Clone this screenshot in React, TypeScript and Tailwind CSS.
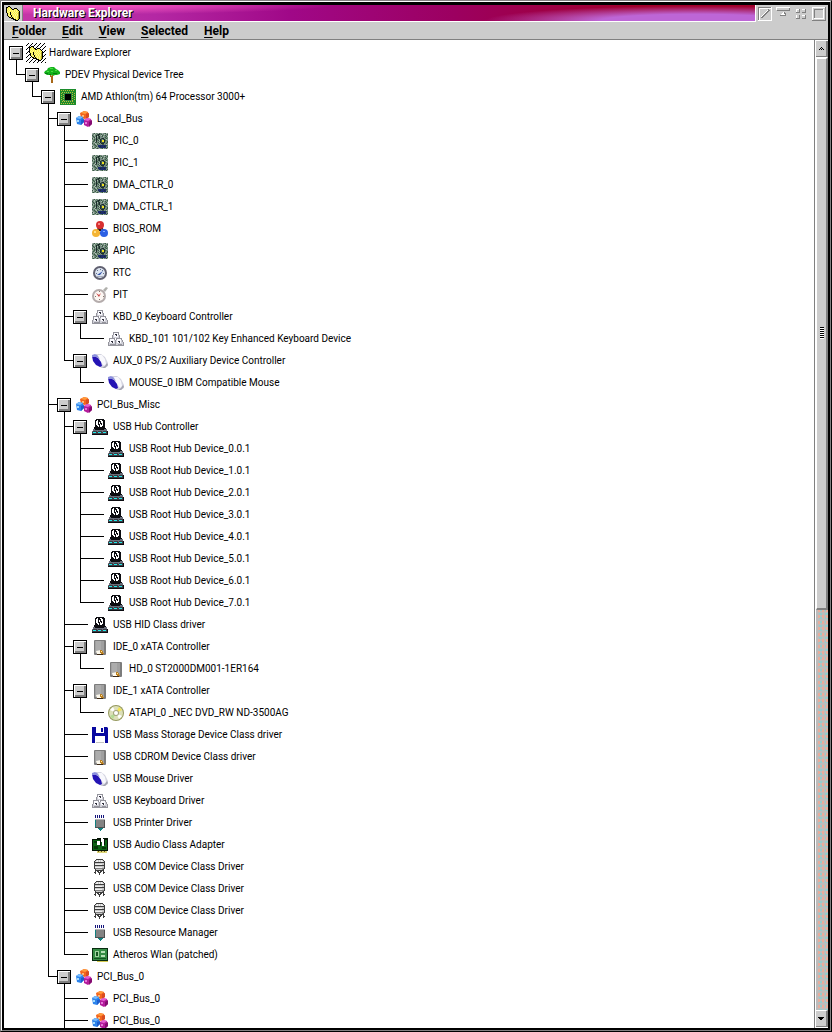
import { useState } from 'react';
import type { ReactNode } from 'react';

type IconName =
  | 'folder'
  | 'tree'
  | 'cpu'
  | 'bus'
  | 'board'
  | 'rom'
  | 'gauge'
  | 'timer'
  | 'keys'
  | 'mouse'
  | 'hub'
  | 'disk'
  | 'cd'
  | 'floppy'
  | 'printer'
  | 'audio'
  | 'com'
  | 'wlan';

type Device = {
  id: string;
  label: string;
  icon: IconName;
  children?: Device[];
  // siblings below this one are not enumerated yet
  more?: boolean;
};

type Row = {
  device: Device;
  guides: boolean[];
  last: boolean;
  depth: number;
};

const hubDevices: Device[] = [0, 1, 2, 3, 4, 5, 6, 7].map((n) => ({
  id: `hub-${n}`,
  label: `USB Root Hub Device_${n}.0.1`,
  icon: 'hub',
}));

const devices: Device[] = [
  {
    id: 'root',
    label: 'Hardware Explorer',
    icon: 'folder',
    children: [
      {
        id: 'pdev',
        label: 'PDEV Physical Device Tree',
        icon: 'tree',
        children: [
          {
            id: 'cpu',
            label: 'AMD Athlon(tm) 64 Processor 3000+',
            icon: 'cpu',
            children: [
              {
                id: 'local',
                label: 'Local_Bus',
                icon: 'bus',
                children: [
                  { id: 'pic0', label: 'PIC_0', icon: 'board' },
                  { id: 'pic1', label: 'PIC_1', icon: 'board' },
                  { id: 'dma0', label: 'DMA_CTLR_0', icon: 'board' },
                  { id: 'dma1', label: 'DMA_CTLR_1', icon: 'board' },
                  { id: 'bios', label: 'BIOS_ROM', icon: 'rom' },
                  { id: 'apic', label: 'APIC', icon: 'board' },
                  { id: 'rtc', label: 'RTC', icon: 'gauge' },
                  { id: 'pit', label: 'PIT', icon: 'timer' },
                  {
                    id: 'kbd0',
                    label: 'KBD_0 Keyboard Controller',
                    icon: 'keys',
                    children: [
                      {
                        id: 'kbd101',
                        label: 'KBD_101 101/102 Key Enhanced Keyboard Device',
                        icon: 'keys',
                      },
                    ],
                  },
                  {
                    id: 'aux0',
                    label: 'AUX_0 PS/2 Auxiliary Device Controller',
                    icon: 'mouse',
                    children: [
                      { id: 'mouse0', label: 'MOUSE_0 IBM Compatible Mouse', icon: 'mouse' },
                    ],
                  },
                ],
              },
              {
                id: 'misc',
                label: 'PCI_Bus_Misc',
                icon: 'bus',
                children: [
                  { id: 'usbhub', label: 'USB Hub Controller', icon: 'hub', children: hubDevices },
                  { id: 'hid', label: 'USB HID Class driver', icon: 'hub' },
                  {
                    id: 'ide0',
                    label: 'IDE_0 xATA Controller',
                    icon: 'disk',
                    children: [{ id: 'hd0', label: 'HD_0 ST2000DM001-1ER164', icon: 'disk' }],
                  },
                  {
                    id: 'ide1',
                    label: 'IDE_1 xATA Controller',
                    icon: 'disk',
                    children: [
                      { id: 'atapi0', label: 'ATAPI_0 _NEC DVD_RW ND-3500AG', icon: 'cd' },
                    ],
                  },
                  { id: 'msd', label: 'USB Mass Storage Device Class driver', icon: 'floppy' },
                  { id: 'cdrom', label: 'USB CDROM Device Class driver', icon: 'disk' },
                  { id: 'usbmouse', label: 'USB Mouse Driver', icon: 'mouse' },
                  { id: 'usbkbd', label: 'USB Keyboard Driver', icon: 'keys' },
                  { id: 'usbprt', label: 'USB Printer Driver', icon: 'printer' },
                  { id: 'usbaudio', label: 'USB Audio Class Adapter', icon: 'audio' },
                  { id: 'com1', label: 'USB COM Device Class Driver', icon: 'com' },
                  { id: 'com2', label: 'USB COM Device Class Driver', icon: 'com' },
                  { id: 'com3', label: 'USB COM Device Class Driver', icon: 'com' },
                  { id: 'resmgr', label: 'USB Resource Manager', icon: 'printer' },
                  { id: 'wlan', label: 'Atheros Wlan (patched)', icon: 'wlan' },
                ],
              },
              {
                id: 'pci0',
                label: 'PCI_Bus_0',
                icon: 'bus',
                children: [
                  { id: 'pci0a', label: 'PCI_Bus_0', icon: 'bus' },
                  { id: 'pci0b', label: 'PCI_Bus_0', icon: 'bus', more: true },
                ],
              },
            ],
          },
        ],
      },
    ],
  },
];

// Draws one rect per dot of a small bitmap, '.' is transparent
const Bitmap = ({ rows, colors }: { rows: string[]; colors: Record<string, string> }) => (
  <>
    {rows.flatMap((line, y) =>
      [...line].map((dot, x) =>
        dot === '.' ? null : (
          <rect key={`${x}-${y}`} x={x} y={y} width="1" height="1" fill={colors[dot]} />
        ),
      ),
    )}
  </>
);

const folderArt = (
  <Bitmap
    colors={{ k: '#000', y: '#f6ee4a', w: '#fdf890', g: '#a89c20' }}
    rows={[
      '................',
      '...kk...........',
      '.kkyyk..........',
      '.kyywyk..kkk....',
      '.kwywyykkywyk...',
      '.kywywywywywyk..',
      '.kwywyywywywyyk.',
      '.kywykwywywywgk.',
      '..kywkywywywygk.',
      '..kwykwywywywgk.',
      '..kywykywywywgk.',
      '...kywkwywywygk.',
      '....kkykywywygk.',
      '......kkkwywygk.',
      '........kkkyyk..',
      '..........kkk...',
    ]}
  />
);

const busArt = (
  <>
    <path d="M4 2L8 0L12 1L13 6L9 8L5 7Z" fill="#f4641c" />
    <path d="M5 2L8 0L12 1L9 3Z" fill="#ff9c3c" />
    <path d="M10 3L13 2V6L10 8Z" fill="#d84c20" />
    <path d="M6 4h2v2h-2z" fill="#ffb870" />
    <path d="M0 7L3 5L7 6L8 11L5 14L1 13Z" fill="#2c84ec" />
    <path d="M0 7L3 5L7 6L4 8Z" fill="#78bcfc" />
    <path d="M1 9h2v2h-2z" fill="#a4dcff" />
    <path d="M5 9L8 8V11L5 14Z" fill="#1c5ccc" />
    <path d="M8 9L11 7L15 8L16 13L12 16L8 14Z" fill="#b41c9c" />
    <path d="M8 9L11 7L15 8L12 10Z" fill="#e460d0" />
    <path d="M9 11h2v2h-2z" fill="#e478d8" />
    <path d="M13 11L16 9V13L13 16Z" fill="#840c70" />
  </>
);

const boardArt = (
  <Bitmap
    colors={{
      d: '#3c5848',
      g: '#64886c',
      l: '#acbcb0',
      k: '#1c2c2c',
      n: '#1c2c6c',
      s: '#7c8c88',
      y: '#f0e020',
    }}
    rows={[
      'lsdlgsldgslsgdls',
      'sglgsdkkgdsglsgd',
      'dslgkdkgsldgsdsg',
      'gdsgkldksgdlsgdl',
      'sgdlksdkssssgdsg',
      'dlgskgdksdkksgdg',
      'gsdgkdsgkdsdkgls',
      'lgdskgdlkdyykdgs',
      'sdglkssgkdyykgsd',
      'gslddgdlkdddksgd',
      'dsglsgsdskkksgds',
      'sgdsldgsgsddsgls',
      'lsgdgsnnnnnnnndg',
      'dlsgdsnnknnnkngs',
      'slgdlsgnnnnnnnsd',
      'gdslgdslsgdlgsdl',
    ]}
  />
);

const hubArt = (
  <Bitmap
    colors={{ k: '#0c0c10', w: '#ffffff', s: '#686c78', d: '#3c3c44', c: '#20ecec' }}
    rows={[
      '....kkkkkkkk....',
      '...kkwkkwwkkk...',
      '...kwwkkkwwkk...',
      '...kwwkwkwwkk...',
      '...kwwkwkkwkk...',
      '...kwwkkwkwkk...',
      '...kkwwkwwwkk...',
      '...kkkwkwwkkk...',
      '..kkkkkkkkkkk...',
      '..kkkkkkkkkkkk..',
      '.sskkkkkkkkksss.',
      '.ssssssssssssss.',
      'sddddsddddsddddk',
      'dcccddcccddcccdk',
      'dddddddddddddddk',
      'kkkkkkkkkkkkkkkk',
    ]}
  />
);

const diskArt = (
  <>
    <rect x="2" y="1" width="12" height="15" rx="1" fill="#7c7c7c" />
    <path d="M3 2h9v12h-9z" fill="#a0a0a0" />
    <path d="M4 2h5v10h-5z" fill="#acacac" />
    <path d="M4 12L9 11V13L11 15H5Z" fill="#fcf8ec" />
    <path d="M8 11h2v1h1v2h1v1h-3v-1h-1z" fill="#bc8020" />
    <path d="M5 15h6v1h-6z" fill="#3c2814" />
    <path d="M9 12h1v1h-1z" fill="#fce8a0" />
  </>
);

const keysArt = (
  <Bitmap
    colors={{ k: '#30303c', g: '#94949c', l: '#d0d0d8', w: '#fbfbff' }}
    rows={[
      '................',
      '.....gggggg.....',
      '.....gwwwwg.....',
      '.....gwkkwg.....',
      '....glwwkwlg....',
      '....glwwwwlg....',
      '....gllllllg....',
      '.gggggg.gggggg..',
      '.gwwwwg.gwwwwg..',
      '.gwwwwlglwwwwlg.',
      '.gwkkwlglwkkwlg.',
      'glwwkwlglwwkwllg',
      'gllllllglllllllg',
      'glggggggllgggglg',
      'gggggggggggggggg',
      '................',
    ]}
  />
);

const mouseArt = (
  <>
    <path d="M4 1L9 1L13 4L16 10L16 13L13 15L9 15L5 9Z" fill="#d4d4e0" />
    <path d="M6 2L10 2L13 6L14 11L12 13L8 8Z" fill="#f8f8fc" />
    <path d="M15 10L16 12L13 15H10L13 13Z" fill="#a4a4b0" />
    <path d="M0 3L2 3L6 5L9 9L10 13L8 14L4 12L1 8Z" fill="#2414b4" />
    <path d="M0 2L3 1L5 2L8 6L5 4L0 4Z" fill="#8c90dc" />
  </>
);

const printerArt = (
  <>
    <path d="M3 0h1v3h-1zM5 0h1v3h-1zM7 0h1v3h-1zM9 0h1v3h-1zM11 0h1v3h-1z" fill="#14147c" />
    <path d="M3 4h10v1h-10z" fill="#b4b4b4" />
    <path d="M3 5h10v7h-10z" fill="#848484" />
    <path d="M3 5h1v7h-1z" fill="#108080" />
    <path d="M12 5h1v7h-1zM3 12h10v1h-10z" fill="#505050" />
    <path d="M6 13h5v1h-1v1h-1v1h-1v-1h-1v-1h-1z" fill="#108080" />
  </>
);

const comArt = (
  <Bitmap
    colors={{ k: '#3c3c3c', g: '#808080', l: '#c8c8c8', w: '#f0f0f0' }}
    rows={[
      '....kkkkkkk.....',
      '...klwlwlwlk....',
      '..klwwlwlwwlk...',
      '..kkkkkkkkkkk...',
      '..klllllllllk...',
      '..kwwwwwwwllk...',
      '..kkkkkkkkkkk...',
      '..klllllllllk...',
      '..kwwwwwwwllk...',
      '..kgggggggggk...',
      '...kllllllgk....',
      '...kkkkkkkkk....',
      '...k.kk.kk.k....',
      '..kk..kkk..kk...',
      '...k...k...k....',
      '.......k........',
    ]}
  />
);

const art: Record<IconName, ReactNode> = {
  folder: folderArt,
  bus: busArt,
  board: boardArt,
  hub: hubArt,
  disk: diskArt,
  keys: keysArt,
  mouse: mouseArt,
  printer: printerArt,
  com: comArt,
  tree: (
    <>
      <path d="M0 6L1 4L3 3L4 1L7 0H10L12 2L14 3L16 5V7L13 8H11L9 9L6 8H3Z" fill="#14b41c" />
      <path d="M3 4h2v1h-2zM6 1h3v1h-3zM11 3h2v1h-2zM7 4h2v1h-2z" fill="#4cdc44" />
      <path d="M1 6h3v1h-3zM9 6h4v1h-4zM5 7h2v1h-2z" fill="#087c10" />
      <path d="M6 8h1v1h1v-1h1v8h-2v-6h-1z" fill="#a86818" />
    </>
  ),
  cpu: (
    <>
      <rect width="16" height="16" fill="#1c8c2c" />
      <path d="M1 1.5H15M2 3.5H14M2 12.5H14M1 14.5H15" stroke="#c0b83c" strokeDasharray="1 1" />
      <path d="M1.5 4V12M3.5 5V12M12.5 5V12M14.5 4V12" stroke="#c0b83c" strokeDasharray="1 1" />
      <rect x="4" y="4" width="8" height="8" fill="#2c8440" />
      <rect x="5" y="5" width="6" height="6" fill="#000" />
    </>
  ),
  rom: (
    <>
      <path d="M8 5L4 12H13Z" fill="none" stroke="#301c18" strokeWidth="2" />
      <circle cx="8" cy="4" r="4" fill="#d83030" />
      <circle cx="4" cy="12" r="4" fill="#f4b434" />
      <circle cx="12" cy="12" r="4" fill="#2c60e4" />
      <path d="M6 2h2v2h-2z" fill="#f88484" />
      <path d="M2 10h2v2h-2z" fill="#ffe08c" />
      <path d="M11 10h2v1h-2z" fill="#84acff" />
      <path d="M7 8h2v2h-2z" fill="#301c18" />
    </>
  ),
  gauge: (
    <>
      <circle cx="8" cy="8" r="7" fill="#606070" />
      <circle cx="8" cy="8" r="5" fill="#dce4f0" />
      <path d="M4 8h1v1h-1zM8 4h1v1h-1zM11 8h1v1h-1zM5 5h1v1h-1zM10 5h1v1h-1z" fill="#64708c" />
      <path d="M5 10L11 6L8 10Z" fill="#3454a8" />
      <path d="M5 11h6v1h-6z" fill="#a8acbc" />
    </>
  ),
  timer: (
    <>
      <path d="M11 3L14 0L16 1L13 5Z" fill="#b0b0ac" />
      <circle cx="7" cy="9" r="7" fill="#b4acac" />
      <circle cx="7" cy="9" r="5" fill="#fcf6f2" />
      <path d="M7 4h1v1h-1zM3 9h1v1h-1zM11 9h1v1h-1zM7 12h1v1h-1z" fill="#88786c" />
      <path d="M4 6L7 10L9 6L7 8Z" fill="#c83c3c" />
    </>
  ),
  cd: (
    <>
      <circle cx="8" cy="8" r="8" fill="#94985c" />
      <circle cx="8" cy="8" r="7" fill="#dcdfb8" />
      <path d="M8 8L2 5L5 2Z" fill="#fff" />
      <path d="M8 8L11 14L14 11Z" fill="#fff" />
      <path d="M8 8L14 5L11 2Z" fill="#f4e450" />
      <path d="M8 8L2 11L5 14Z" fill="#b4dc94" />
      <circle cx="8" cy="8" r="3" fill="#a4a47c" />
      <circle cx="8" cy="8" r="2" fill="#fff" />
    </>
  ),
  floppy: (
    <>
      <path d="M0 0H15L16 1V16H0Z" fill="#0808a0" />
      <path d="M4 0h8v6h-8z" fill="#fff" />
      <path d="M9 1h2v4h-2z" fill="#0808a0" />
      <path d="M3 9h10v7h-10z" fill="#fff" />
      <path d="M4 15h8v1h-8z" fill="#c4c4c4" />
    </>
  ),
  audio: (
    <>
      <path d="M0 2H5V1H16V14H0Z" fill="#041404" />
      <path d="M1 3h14v10h-14z" fill="#0c6414" />
      <path d="M2 9h4v3h-4zM10 10h4v2h-4zM2 4h3v2h-3z" fill="#043808" />
      <path d="M5 4h3v4h-3zM9 0h2v2h1v7h-2v-4h-1z" fill="#fff" />
      <path d="M8 2h1v7h-1zM12 1h1v7h-1z" fill="#041404" />
      <path d="M5 14h10v2h-10z" fill="#dcd478" />
      <path d="M6 14h1v1h-1zM9 14h1v1h-1zM12 14h1v1h-1z" fill="#685c14" />
    </>
  ),
  wlan: (
    <>
      <path d="M0 1h16v13h-16z" fill="#082c10" />
      <path d="M1 2h14v11h-14z" fill="#348c44" />
      <path d="M3 4h4v6h-4z" fill="#a0d4a0" />
      <path d="M4 5h2v4h-2z" fill="#145420" />
      <path d="M9 4h4v2h-4zM9 8h4v2h-4z" fill="#b4e0b4" />
      <path d="M2 11h12v1h-12z" fill="#145420" />
      <path d="M5 14h11v1h-11z" fill="#d4c850" />
    </>
  ),
};

const DeviceIcon = ({ name }: { name: IconName }) => (
  <svg viewBox="0 0 16 16" className="size-4 shrink-0" aria-hidden="true">
    {art[name]}
  </svg>
);

// Icon of the opened object, with the "in use" hatching behind it
const OpenIcon = ({ name }: { name: IconName }) => (
  <svg viewBox="-2 -2 20 20" className="-mx-[2px] size-5 shrink-0" aria-hidden="true">
    <path
      d="M-2 1L1 -2M-2 5L5 -2M-2 9L9 -2M-2 13L13 -2M-2 17L17 -2M1 18L18 1M5 18L18 5M9 18L18 9M13 18L18 13M17 18L18 17"
      stroke="#000"
      shapeRendering="crispEdges"
    />
    {art[name]}
  </svg>
);

const flatten = (
  list: Device[],
  closed: string[],
  depth = 0,
  guides: boolean[] = [],
): Row[] =>
  list.flatMap((device, i) => {
    const last = i === list.length - 1 && !device.more;
    const row = { device, guides, last, depth };
    if (!device.children || closed.includes(device.id)) return [row];
    const next = depth === 0 ? [] : [...guides, !last];
    return [row, ...flatten(device.children, closed, depth + 1, next)];
  });

const TreeRow = ({
  row,
  open,
  onToggle,
}: {
  row: Row;
  open: boolean;
  onToggle: () => void;
}) => {
  const { device, guides, last, depth } = row;
  const branch = !!device.children;

  return (
    <li className="flex h-[22px] shrink-0 pl-[5px]">
      {depth > 0 && (
        <div className="flex shrink-0 pl-[7px]">
          {guides.map((on, i) => (
            <span key={i} className={on ? 'w-4 border-l border-black' : 'w-4'} />
          ))}
          <span className={branch ? 'flex w-[9px] flex-col' : 'mr-1 flex w-6 flex-col'}>
            <span className="h-[11px] border-b border-l border-black" />
            {!last && <span className="h-[11px] border-l border-black" />}
          </span>
        </div>
      )}
      {branch && (
        <div className="mr-[5px] flex w-[14px] shrink-0 flex-col pt-1">
          <button
            type="button"
            aria-expanded={open}
            aria-label={device.label}
            onClick={onToggle}
            className="flex size-[14px] shrink-0 items-center justify-center border border-black bg-[#ccc] shadow-[inset_1px_1px_0_#fff,inset_-2px_-2px_0_#808080]"
          >
            <span className="h-px w-[6px] bg-black" />
          </button>
          {open && <span className="ml-[7px] h-1 border-l border-black" />}
        </div>
      )}
      <div className="flex items-center gap-[5px]">
        {depth === 0 ? <OpenIcon name={device.icon} /> : <DeviceIcon name={device.icon} />}
        <span className="whitespace-nowrap">{device.label}</span>
      </div>
    </li>
  );
};

const menus = ['Folder', 'Edit', 'View', 'Selected', 'Help'];

const TitleBar = () => (
  <header className="flex h-[17px] shrink-0 bg-[#ccc]">
    <div className="flex min-w-0 flex-1 items-center border-r border-b border-white bg-[radial-gradient(ellipse_28%_95%_at_92%_100%,#bd66d6_0%,#bd66d6_45%,transparent_100%),radial-gradient(ellipse_36%_60%_at_8%_0%,#ff5cc4_0%,transparent_100%),linear-gradient(to_right,#c838a8_0%,#b428a4_20%,#a00888_38%,#9c0060_60%,#a0002a_85%)]">
      <button
        type="button"
        aria-label="System menu"
        className="flex h-full w-[19px] shrink-0 items-center justify-center border-r border-[#808080] bg-[#ccc]"
      >
        <DeviceIcon name="folder" />
      </button>
      <h1 className="ml-[10px] text-xs leading-4 font-bold text-white [text-shadow:1px_1px_0_#000]">
        Hardware Explorer
      </h1>
    </div>
    <div className="flex h-full items-center gap-1 px-[2px]">
      <button type="button" aria-label="Close">
        <svg width="14" height="14" shapeRendering="crispEdges" fill="none">
          <path d="M0.5 0.5H13.5V13.5H0.5Z" stroke="#808080" />
          <path d="M1.5 13V1.5H13M13.5 0V13.5H0" stroke="#fff" />
          <path d="M3 11L11 3" stroke="#808080" strokeWidth="2" />
          <path d="M3 10L10 3" stroke="#fff" />
        </svg>
      </button>
      <button type="button" aria-label="Hide">
        <svg width="14" height="14" shapeRendering="crispEdges" fill="none">
          <path d="M0.5 3V0.5H14" stroke="#fff" />
          <path d="M1 3.5H13.5V1" stroke="#808080" />
          <path d="M4 8L7 5L10 8Z" fill="#fff" />
          <path d="M4 8.5H10M8 5L10 8" stroke="#808080" />
        </svg>
      </button>
      <button type="button" aria-label="Minimize">
        <svg width="14" height="14" shapeRendering="crispEdges" fill="none">
          <path d="M2.5 5V2.5H5M8 2.5H11M2.5 11V8M8 8.5H11" stroke="#fff" />
          <path d="M5.5 2V5.5H2M11.5 2V5.5H8M5.5 8V11.5H2M11.5 8V11.5H8" stroke="#808080" />
        </svg>
      </button>
      <button type="button" aria-label="Maximize">
        <svg width="14" height="14" shapeRendering="crispEdges" fill="none">
          <path d="M0.5 13V0.5H13M11.5 2V11.5H2" stroke="#fff" />
          <path d="M13.5 0V13.5H0M2.5 11V2.5H11" stroke="#808080" />
        </svg>
      </button>
    </div>
  </header>
);

const ScrollBar = () => (
  <div className="flex w-[14px] shrink-0 flex-col border-l border-[#808080] bg-white pl-px">
    <button
      type="button"
      aria-label="Scroll up"
      className="mt-px flex h-4 shrink-0 items-center justify-center border-r-2 border-b border-[#808080] bg-[#ccc]"
    >
      <svg width="5" height="3" shapeRendering="crispEdges" fill="#000">
        <path d="M2 0h1v1h-1zM1 1h1v1h-1zM3 1h1v1h-1zM0 2h1v1h-1zM2 2h1v1h-1zM4 2h1v1h-1z" />
      </svg>
    </button>
    <div className="flex-1 bg-[#bcbcbc] bg-[conic-gradient(#e8ac9c_25%,transparent_0),conic-gradient(#94cccc_25%,transparent_0)] bg-[size:4px_6px,6px_4px]">
      <div className="flex h-[58%] items-center justify-center border-t-2 border-r-2 border-b-2 border-l border-[#808080] border-t-white border-l-white bg-[#ccc]">
        <span className="h-3 w-1 bg-[repeating-linear-gradient(to_bottom,#000_0_1px,#fff_1px_2px)]" />
      </div>
    </div>
    <button
      type="button"
      aria-label="Scroll down"
      className="mb-px flex h-[17px] shrink-0 items-center justify-center border-t border-r-2 border-b border-[#808080] border-t-white bg-[#ccc]"
    >
      <svg width="6" height="3" shapeRendering="crispEdges" fill="#000">
        <path d="M0 0h6v1h-6zM1 1h4v1h-4zM2 2h2v1h-2z" />
      </svg>
    </button>
  </div>
);

const App = () => {
  const [closed, setClosed] = useState<string[]>([]);

  const toggle = (id: string) =>
    setClosed((ids) => (ids.includes(id) ? ids.filter((x) => x !== id) : [...ids, id]));

  return (
    <div className="h-screen border border-t-[#808080] border-r-black border-b-black border-l-[#808080] font-[Roboto,sans-serif] text-black">
      <div className="h-full border border-t-white border-r-[#808080] border-b-[#808080] border-l-white">
        <div className="flex h-full flex-col border-2 border-t-3 border-black">
          <TitleBar />
          <nav className="flex h-[18px] shrink-0 items-center gap-4 border-b border-[#808080] bg-[#ccc] px-2 text-xs leading-4 font-bold">
            {menus.map((menu) => (
              <button type="button" key={menu}>
                <span className="underline underline-offset-2">{menu[0]}</span>
                {menu.slice(1)}
              </button>
            ))}
          </nav>
          <main className="flex min-h-0 flex-1 bg-white">
            <ul className="flex min-w-0 flex-1 flex-col overflow-hidden pt-[2px] text-[10px] leading-4">
              {flatten(devices, closed).map((row) => (
                <TreeRow
                  key={row.device.id}
                  row={row}
                  open={!closed.includes(row.device.id)}
                  onToggle={() => toggle(row.device.id)}
                />
              ))}
            </ul>
            <ScrollBar />
          </main>
        </div>
      </div>
    </div>
  );
};

export default App;
